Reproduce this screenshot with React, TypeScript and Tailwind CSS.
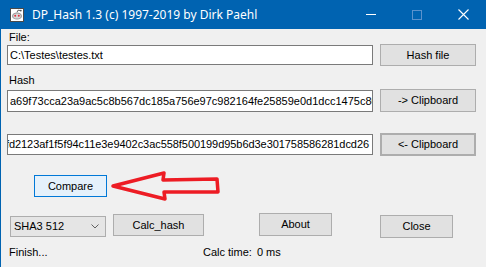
import React from "react";

const font = { fontFamily: '"Liberation Sans", Arial, sans-serif' };

function Btn({ children, className = "" }: { children: React.ReactNode; className?: string }) {
  return (
    <div
      className={
        "flex items-center justify-center bg-[#e1e1e1] border border-[#adadad] text-[11px] leading-[13px] text-black shrink-0 " +
        className
      }
    >
      {children}
    </div>
  );
}

function TitleIcon() {
  return (
    <svg width="14" height="14" viewBox="0 0 14 14" className="shrink-0">
      <rect x="0.5" y="0.5" width="13" height="13" fill="#ffffff" stroke="#4a4a4a" />
      <ellipse cx="7" cy="8" rx="5" ry="3.6" fill="#9a9a9a" />
      <ellipse cx="7" cy="8" rx="3.8" ry="2.6" fill="#d8d8d8" />
      <circle cx="5.2" cy="7.8" r="1" fill="#e0303a" />
      <circle cx="8.8" cy="7.8" r="1" fill="#e0303a" />
      <path d="M7 4.3 L8 2.2 L10.5 2.6" stroke="#555" strokeWidth="0.9" fill="none" />
      <circle cx="10.8" cy="2.6" r="0.9" fill="#555" />
    </svg>
  );
}

export default function App() {
  return (
    <div className="w-[489px] h-[267px] bg-white flex overflow-hidden" style={font}>
      <div className="w-[486px] h-[267px] flex flex-col border-l border-[#0063b1] bg-[#f0f0f0]">
        {/* Title bar */}
        <div className="h-[29px] bg-[#0063b1] flex items-center shrink-0">
          <div className="ml-[9px]">
            <TitleIcon />
          </div>
          <div
            className="ml-[8px] text-white text-[12px] leading-[16px] whitespace-nowrap"
            style={{ fontFamily: '"Noto Sans", "Open Sans", sans-serif' }}
          >
            DP_Hash 1.3 (c) 1997-2019 by Dirk Paehl
          </div>
          <div className="ml-auto flex h-full">
            <div className="w-[46px] h-full flex items-center justify-center">
              <div className="w-[10px] h-[1px] bg-white" />
            </div>
            <div className="w-[46px] h-full flex items-center justify-center">
              <div className="w-[10px] h-[10px] border border-[#5b92cd]" />
            </div>
            <div className="w-[46px] h-full flex items-center justify-center">
              <svg width="11" height="11" viewBox="0 0 11 11">
                <path d="M0.5 0.5 L10.5 10.5 M10.5 0.5 L0.5 10.5" stroke="#ffffff" strokeWidth="1.1" />
              </svg>
            </div>
          </div>
        </div>

        {/* Client */}
        <div className="flex flex-col pl-[6px] text-[11px] leading-[13px] text-black">
          <div className="mt-[2px] ml-[2px] h-[13px]">File:</div>

          <div className="flex items-center h-[22px]">
            <div className="w-[366px] h-[20px] bg-white border border-[#7a7a7a] flex items-center pl-[2px] whitespace-nowrap overflow-hidden">
              C:\Testes\testes.txt
            </div>
            <Btn className="ml-[7px] w-[96px] h-[22px]">Hash file</Btn>
          </div>

          <div className="mt-[8px] ml-[2px] h-[13px]">Hash</div>

          <div className="mt-[2px] flex items-center h-[23px]">
            <div className="w-[366px] h-[22px] mt-[1px] bg-white border border-[#7a7a7a] flex items-center pl-[2px] whitespace-nowrap overflow-hidden">
              a69f73cca23a9ac5c8b567dc185a756e97c982164fe25859e0d1dcc1475c80b2
            </div>
            <Btn className="ml-[7px] w-[96px] h-[23px]">-&gt; Clipboard</Btn>
          </div>

          <div className="mt-[21px] flex items-center h-[23px]">
            <div className="w-[366px] h-[21px] bg-white border border-[#7a7a7a] flex items-center justify-end pr-[3px] whitespace-nowrap overflow-hidden">
              <span className="shrink-0 tracking-[-0.06px]">fd2123af1f5f94c11e3e9402c3ac558f500199d95b6d3e301758586281dcd26</span>
            </div>
            <Btn className="ml-[7px] w-[96px] h-[23px] border-2 border-[#0078d7]">&lt;- Clipboard</Btn>
          </div>

          <div className="mt-[19px] flex items-center h-[22px]">
            <div className="ml-[27px] w-[73px] h-[22px] bg-[#e5f1fb] border border-[#0078d7] flex items-center justify-center shrink-0">
              Compare
            </div>
            <svg width="112" height="34" viewBox="0 0 112 34" className="ml-[3px] shrink-0">
              <path
                d="M3 17 L54 4 L53 11 L107 10 L108 23 L54 23 L55 30 Z"
                fill="none"
                stroke="#ed1c24"
                strokeWidth="3.5"
                strokeLinejoin="round"
              />
            </svg>
          </div>

          <div className="mt-[16px] flex items-start h-[25px]">
            <div className="ml-[3px] mt-[3px] w-[96px] h-[21px] bg-[#e5e5e5] border border-[#adadad] flex items-center pl-[3px] shrink-0">
              <span>SHA3 512</span>
              <svg width="8" height="5" viewBox="0 0 8 5" className="ml-auto mr-[6px]">
                <path d="M0.5 0.5 L4 4 L7.5 0.5" stroke="#606060" fill="none" strokeWidth="1" />
              </svg>
            </div>
            <Btn className="ml-[7px] mt-[1px] w-[91px] h-[22px]">Calc_hash</Btn>
            <Btn className="ml-[55px] w-[73px] h-[23px]">About</Btn>
            <Btn className="ml-[48px] mt-[2px] w-[73px] h-[23px]">Close</Btn>
          </div>

          <div className="mt-[8px] flex h-[13px] whitespace-nowrap">
            <div className="ml-[2px] w-[194px]">Finish...</div>
            <div>Calc time:</div>
            <div className="ml-[5px]">0 ms</div>
          </div>
        </div>
      </div>
    </div>
  );
}
